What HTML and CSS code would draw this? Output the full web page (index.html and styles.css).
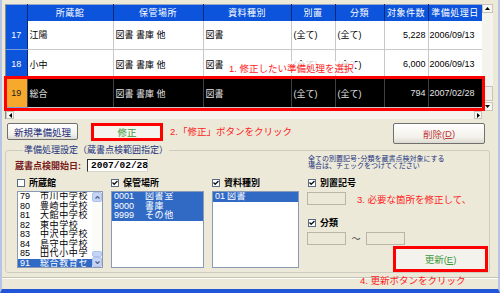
FILE: index.html
```html
<!DOCTYPE html>
<html lang="ja">
  <head>
    <meta charset="utf-8" />
    <title>準備処理</title>
    <link rel="stylesheet" href="styles.css">
  </head>
  <body>
    <div class="window">
      <div class="grid-area">
        <div class="grid-view">
          <table class="grid">
            <colgroup>
              <col class="c-row"><col class="c-lib"><col class="c-loc"><col class="c-kind">
              <col class="c-sep"><col class="c-cls"><col class="c-cnt"><col class="c-date">
            </colgroup>
            <thead>
              <tr>
                <th></th><th>所蔵館</th><th>保管場所</th><th>資料種別</th>
                <th>別置</th><th>分類</th><th>対象件数</th><th>準備処理日</th>
              </tr>
            </thead>
            <tbody>
              <tr>
                <td class="rownum">17</td><td>江陽</td><td>図書 書庫 他</td><td>図書</td>
                <td>(全て)</td><td>(全て)</td><td class="num">5,228</td><td class="date">2006/09/13</td>
              </tr>
              <tr>
                <td class="rownum">18</td><td>小中</td><td>図書 書庫 他</td><td>図書</td>
                <td>(全て)</td><td>(全て)</td><td class="num">6,000</td><td class="date">2006/09/13</td>
              </tr>
              <tr class="selected">
                <td class="rownum">19</td><td>総合</td><td>図書 書庫 他</td><td>図書</td>
                <td>(全て)</td><td>(全て)</td><td class="num">794</td><td class="date">2007/02/28</td>
              </tr>
            </tbody>
          </table>
        </div>
        <div class="vscroll">
          <span class="sb-btn"><svg width="5" height="3" viewBox="0 0 5 3"><path d="M0 3h5L2.5 0z"/></svg></span>
          <span class="sb-track"><span class="sb-thumb"></span></span>
          <span class="sb-btn"><svg width="5" height="3" viewBox="0 0 5 3"><path d="M0 0h5L2.5 3z"/></svg></span>
        </div>
        <div class="hscroll">
          <span class="sb-btn"><svg width="3" height="5" viewBox="0 0 3 5"><path d="M3 0v5L0 2.5z"/></svg></span>
          <span class="sb-track"></span>
          <span class="sb-btn"><svg width="3" height="5" viewBox="0 0 3 5"><path d="M0 0v5L3 2.5z"/></svg></span>
        </div>
        <div class="corner"></div>
      </div>

      <div class="actions">
        <button class="btn btn-new">新規準備処理</button>
        <div class="mark mark-edit"><button class="btn btn-edit">修正</button></div>
        <span class="note note-2">2.「修正」ボタンをクリック</span>
        <button class="btn btn-del">削除(<u>D</u>)</button>
      </div>

      <fieldset class="group">
        <legend>準備処理設定（蔵書点検範囲指定）</legend>
        <div class="group-body">
          <div class="left">
            <div class="date-row">
              <span class="date-label">蔵書点検開始日:</span>
              <span class="date-input">2007/02/28</span>
            </div>
            <div class="pick">
              <label class="check"><span class="box"></span>所蔵館</label>
              <label class="check"><span class="box"><svg width="6" height="6" viewBox="0 0 6 6"><path d="M0.5 2.5L2.2 4.3L5.5 1"/></svg></span>保管場所</label>
              <label class="check"><span class="box"><svg width="6" height="6" viewBox="0 0 6 6"><path d="M0.5 2.5L2.2 4.3L5.5 1"/></svg></span>資料種別</label>

              <div class="list list-lib">
                <ul class="items">
                  <li><span class="code">79</span>市川中学校</li>
                  <li><span class="code">80</span>豊崎中学校</li>
                  <li><span class="code">81</span>大館中学校</li>
                  <li><span class="code">82</span>東中学校</li>
                  <li><span class="code">83</span>中沢中学校</li>
                  <li><span class="code">84</span>島守中学校</li>
                  <li><span class="code">85</span>田代小中学</li>
                  <li class="on"><span class="code">91</span>総合教育セ</li>
                </ul>
                <div class="lscroll">
                  <span class="ls-btn"><svg width="5" height="3" viewBox="0 0 5 3"><path d="M0.5 2.5L2.5 0.5L4.5 2.5"/></svg></span>
                  <span class="ls-track"><span class="ls-thumb"></span></span>
                  <span class="ls-btn"><svg width="5" height="3" viewBox="0 0 5 3"><path d="M0.5 0.5L2.5 2.5L4.5 0.5"/></svg></span>
                </div>
              </div>
              <div class="list">
                <ul class="items items-loc">
                  <li class="on"><span class="code">0001</span>図書室</li>
                  <li class="on"><span class="code">9000</span>書庫</li>
                  <li class="on"><span class="code">9999</span>その他</li>
                </ul>
              </div>
              <div class="list">
                <ul class="items items-kind">
                  <li class="on"><span class="code">01</span>図書</li>
                </ul>
              </div>
            </div>
          </div>

          <div class="right">
            <p class="hint">全ての別置記号･分類を蔵書点検対象にする<br>場合は、チェックをつけてください</p>
            <label class="check check-sep"><span class="box"><svg width="6" height="6" viewBox="0 0 6 6"><path d="M0.5 2.5L2.2 4.3L5.5 1"/></svg></span>別置記号</label>
            <div class="field-row">
              <span class="field"></span>
              <span class="note note-3">3. 必要な箇所を修正して、</span>
            </div>
            <label class="check check-cls"><span class="box"><svg width="6" height="6" viewBox="0 0 6 6"><path d="M0.5 2.5L2.2 4.3L5.5 1"/></svg></span>分類</label>
            <div class="field-row">
              <span class="field"></span>
              <span class="tilde">～</span>
              <span class="field"></span>
            </div>
            <div class="mark mark-save"><button class="btn btn-save">更新(<u>E</u>)</button></div>
          </div>
        </div>
      </fieldset>

      <div class="status"></div>

      <div class="mark mark-row"></div>
      <span class="note note-1">1. 修正したい準備処理を選択</span>
      <span class="note note-4">4. 更新ボタンをクリック</span>
    </div>
  </body>
</html>
```

FILE: styles.css
```css
* {
  box-sizing: border-box;
}
body {
  margin: 0;
  font-family: 'Liberation Sans', 'Noto Sans CJK JP', sans-serif;
  font-size: 9px;
  color: #000;
  background: #ece9d8;
}
.window {
  position: relative;
  display: flex;
  flex-direction: column;
  width: 500px;
  height: 293px;
  padding-top: 4px;
  background: #ece9d8;
  border-left: 2px solid #b6c4e6;
  border-right: 2px solid #b6c4e6;
  border-bottom: 4px solid #1f55d6;
  overflow: hidden;
}

/* grid */
.grid-area {
  display: grid;
  grid-template-columns: 1fr 11px;
  grid-template-rows: 107px 8px;
  height: 115px;
  margin: 0 5px 0 3px;
  border-left: 1px solid #8a8a8a;
}
.grid-view {
  overflow: hidden;
  background: #fff;
}
.grid {
  width: 476px;
  table-layout: fixed;
  border-collapse: collapse;
}
.c-row { width: 21px; }
.c-lib { width: 86px; }
.c-loc { width: 90px; }
.c-kind { width: 88px; }
.c-sep { width: 44px; }
.c-cls { width: 49px; }
.c-cnt { width: 44px; }
.c-date { width: 54px; }
.grid th {
  height: 16px;
  padding: 0;
  font-weight: normal;
  color: #fff;
  background: #0c54dc;
  border-right: 1px solid #0a2a78;
  border-top: 1px solid #9aa8c8;
  letter-spacing: 0.5px;
  white-space: nowrap;
}
.grid td {
  height: 29px;
  padding: 0 2px;
  border-right: 1px solid #c8c8c8;
  border-bottom: 1px solid #c8c8c8;
  white-space: nowrap;
  overflow: hidden;
}
.grid td.rownum {
  text-align: center;
  color: #fff;
  background: #0c54dc;
  border-right: 1px solid #0a2a78;
  border-bottom: 1px solid #7a9ae0;
}
.grid td.num {
  text-align: right;
}
.grid td.date {
  padding: 0 1px;
}
.grid tr.selected td {
  color: #e4e4e4;
  background: #000;
  border-right-color: #404040;
}
.grid tr.selected td.rownum {
  color: #222;
  background: #f7a92e;
}

/* scrollbars */
.vscroll,
.hscroll {
  display: flex;
  background: #f4f3ee;
}
.vscroll {
  flex-direction: column;
}
.sb-btn {
  display: flex;
  align-items: center;
  justify-content: center;
  flex: none;
  width: 11px;
  height: 9px;
  background: #f6f6f2;
  border: 1px solid #c6c4b8;
}
.hscroll .sb-btn {
  width: 8px;
  height: 8px;
}
.sb-track {
  flex: 1;
  display: flex;
  flex-direction: column;
  justify-content: flex-end;
}
.sb-thumb {
  height: 15px;
  margin-bottom: 1px;
  background: #f0efe8;
  border: 1px solid #c6c4b8;
}
.corner {
  background: #ece9d8;
}

/* action buttons */
.actions {
  display: flex;
  align-items: flex-start;
  height: 21px;
  margin-top: 4px;
  padding-left: 5px;
}
.btn {
  display: flex;
  align-items: center;
  justify-content: center;
  padding: 0;
  font: inherit;
  font-size: 9.5px;
  border: 1px solid #707070;
  border-radius: 2px;
  background: linear-gradient(#ffffff, #f2f1ea 70%, #dcdad0);
}
.btn-new {
  width: 71px;
  height: 17px;
  color: #1a2a78;
}
.mark {
  border: 3px solid #ff0000;
}
.mark-edit {
  display: flex;
  width: 72px;
  height: 18px;
  margin-left: 13px;
}
.btn-edit {
  flex: 1;
  color: #3c9a3c;
  border: none;
  border-radius: 0;
  background: #f5f4ef;
}
.btn-del {
  width: 92px;
  height: 21px;
  margin-left: auto;
  margin-right: 13px;
  color: #c03838;
}
.note {
  color: #ff1a1a;
  font-size: 9.5px;
  white-space: nowrap;
}
.note-2 {
  margin-left: 7px;
  line-height: 18px;
}

/* settings group */
.group {
  height: 128px;
  margin: 1px 8px 0 3px;
  padding: 0 0 0 11px;
  border: 1px solid #cfcdbf;
  border-radius: 3px;
}
.group legend {
  margin-left: 6px;
  padding: 0 1px;
  line-height: 10px;
  color: #22327e;
}
.group-body {
  display: flex;
  gap: 8px;
}
.left {
  width: 282px;
}
.date-row {
  display: flex;
  align-items: center;
  height: 12px;
  margin-top: 4px;
}
.date-label {
  width: 72px;
  margin-left: -2px;
  font-weight: bold;
  color: #7a1a1a;
}
.date-input {
  width: 61px;
  height: 13px;
  padding-left: 3px;
  font-family: 'Liberation Mono', monospace;
  font-size: 9.5px;
  font-weight: bold;
  line-height: 11px;
  background: #fff;
  border: 1px solid;
  border-color: #303030 #d8d6cc #d8d6cc #303030;
}
.pick {
  display: grid;
  grid-template-columns: 86px 93px 87px;
  column-gap: 8px;
  row-gap: 4px;
  margin-top: 7px;
}
.check {
  display: flex;
  align-items: center;
  gap: 4px;
  height: 9px;
  font-weight: bold;
}
.box {
  display: flex;
  align-items: center;
  justify-content: center;
  width: 8px;
  height: 8px;
  background: #fff;
  border: 1px solid #5a6a80;
}
.box path {
  fill: none;
  stroke: #111;
  stroke-width: 1.3;
}
.list {
  display: flex;
  height: 77px;
  background: #fff;
  border: 1px solid #8a9ab4;
}
.items {
  flex: 1;
  margin: 0;
  padding: 0;
  list-style: none;
  overflow: hidden;
}
.items li {
  display: flex;
  height: 9.5px;
  padding-left: 2px;
  line-height: 9.5px;
  letter-spacing: 0.6px;
  white-space: nowrap;
}
.items li.on {
  color: #fff;
  background: #316ac5;
}
.code {
  width: 20px;
  flex: none;
  letter-spacing: 0;
}
.items-loc .code {
  width: 31px;
}
.items-kind .code {
  width: 12px;
}
.lscroll {
  display: flex;
  flex-direction: column;
  width: 10px;
  background: #fbfbf8;
}
.ls-btn {
  display: flex;
  align-items: center;
  justify-content: center;
  height: 10px;
  background: #c4d4f6;
  border: 1px solid #b0c2ea;
  border-radius: 2px;
}
.ls-btn path {
  fill: none;
  stroke: #4d6185;
  stroke-width: 1.2;
}
.ls-track {
  flex: 1;
  display: flex;
  flex-direction: column;
  justify-content: flex-end;
}
.ls-thumb {
  height: 6px;
  background: #c4d4f6;
  border: 1px solid #b0c2ea;
  border-radius: 2px;
}

.right {
  display: flex;
  flex-direction: column;
  width: 181px;
}
.hint {
  height: 14px;
  margin: 0 0 0 1px;
  font-size: 7px;
  line-height: 7px;
  color: #22327e;
  white-space: nowrap;
}
.check-sep {
  margin: 9px 0 0 1px;
}
.check-cls {
  margin: 13px 0 0 1px;
}
.field-row {
  display: flex;
  align-items: center;
  height: 13px;
  margin-top: 5px;
}
.field {
  width: 39px;
  height: 13px;
  background: #ece9d8;
  border: 1px solid #b8b6a8;
}
.note-3 {
  margin-left: 11px;
}
.tilde {
  width: 20px;
  text-align: center;
  color: #444;
}
.mark-save {
  display: flex;
  width: 95px;
  height: 26px;
  margin: 1px 0 0 86px;
}
.btn-save {
  flex: 1;
  color: #3c9a3c;
  border: none;
  border-radius: 0;
  background: #f3f2ec;
}

.status {
  height: 12px;
  margin-top: 4px;
  border-top: 1px solid #c4c2b4;
  box-shadow: inset 0 1px #fff;
}

/* annotations over the form */
.mark-row {
  position: absolute;
  left: 2px;
  top: 76px;
  width: 481px;
  height: 35px;
}
.note-1 {
  position: absolute;
  left: 226px;
  top: 61px;
  padding: 0 1px;
  background: rgba(255, 255, 255, 0.8);
}
.note-4 {
  position: absolute;
  left: 358px;
  top: 273px;
}
```
